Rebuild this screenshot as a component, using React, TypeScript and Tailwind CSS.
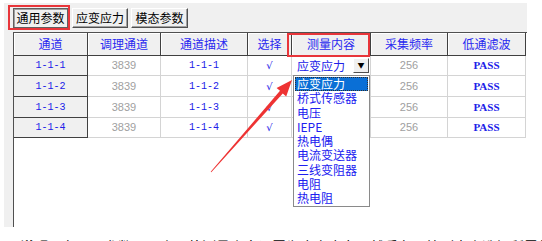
import React from "react";

const cn = "font-['Noto_Sans_CJK_SC',sans-serif]";

const cols = [74, 73, 87, 44, 79, 77, 78];
const heads = ["通道", "调理通道", "通道描述", "选择", "测量内容", "采集频率", "低通滤波"];
const rowHeights = [20, 21, 21, 20];
const options = ["应变应力", "桥式传感器", "电压", "IEPE", "热电偶", "电流变送器", "三线变阻器", "电阻", "热电阻"];

function Tab({ label, w, active }: { label: string; w: number; active?: boolean }) {
    return (
        <div
            style={{ width: w }}
            className={
                "h-[20px] flex items-center justify-center text-[12px] text-black bg-[#f0f0f0] " +
                (active
                    ? "border border-[#606060] shadow-[inset_1px_1px_0_#a0a0a0]"
                    : "border border-t-white border-l-white border-r-[#505050] border-b-[#505050] shadow-[inset_-1px_-1px_0_#a0a0a0]")
            }
        >
            {label}
        </div>
    );
}

export default function App() {
    return (
        <div className={"relative w-[542px] h-[241px] bg-white overflow-hidden " + cn}>
            {/* Window panel */}
            <div className="ml-[4px] mt-[3px] w-[523px] h-[224px] bg-[#f0f0f0] flex flex-col">
                <div className="flex pl-[9px] pt-[5px] h-[29px]">
                    <Tab label="通用参数" w={55} active />
                    <div className="w-[4px]" />
                    <Tab label="应变应力" w={56} />
                    <div className="w-[3px]" />
                    <Tab label="模态参数" w={57} />
                </div>

                {/* Grid */}
                <div className="ml-[9px] flex-1 bg-white border-l border-t border-[#505050] flex flex-col overflow-hidden">
                    <div className="flex h-[23px]">
                        {heads.map((h, i) => (
                            <div
                                key={h}
                                style={{ width: cols[i] }}
                                className="shrink-0 bg-[#f0f0f0] border-r border-b border-[#404040] shadow-[inset_1px_1px_0_#ffffff] flex items-center justify-center text-[12px] text-[#2828f0]"
                            >
                                {h}
                            </div>
                        ))}
                    </div>
                    {rowHeights.map((rh, r) => {
                        const id = `1-1-${r + 1}`;
                        return (
                            <div key={id} className="flex" style={{ height: rh }}>
                                <div style={{ width: cols[0] }} className="shrink-0 bg-[#f0f0f0] border-r border-b border-[#404040] flex items-center justify-center font-['Liberation_Mono',monospace] text-[10px] text-[#2020e8]">
                                    {id}
                                </div>
                                <div style={{ width: cols[1] }} className="shrink-0 border-r border-b border-[#d4d4d4] flex items-center justify-center font-['Liberation_Sans',sans-serif] text-[11px] text-[#a0a0a0]">
                                    3839
                                </div>
                                <div style={{ width: cols[2] }} className="shrink-0 border-r border-b border-[#d4d4d4] flex items-center justify-center font-['Liberation_Mono',monospace] text-[10px] text-[#2020e8]">
                                    {id}
                                </div>
                                <div style={{ width: cols[3] }} className="shrink-0 border-r border-b border-[#d4d4d4] flex items-center justify-center font-['DejaVu_Sans',sans-serif] italic text-[10px] text-[#2020e8]">
                                    √
                                </div>
                                <div style={{ width: cols[4] }} className="shrink-0 border-r border-b border-[#d4d4d4] flex items-center">
                                    {r === 0 && (
                                        <>
                                            <span className="flex-1 pl-[5px] text-[12px] text-[#2020e8]">应变应力</span>
                                            <span className="w-[16px] h-[15px] mr-[1px] bg-[#f0f0f0] border border-t-white border-l-white border-r-[#505050] border-b-[#505050] flex items-center justify-center text-[7px] text-black">
                                                ▼
                                            </span>
                                        </>
                                    )}
                                </div>
                                <div style={{ width: cols[5] }} className="shrink-0 border-r border-b border-[#d4d4d4] flex items-center justify-center font-['Liberation_Sans',sans-serif] text-[11px] text-[#a0a0a0]">
                                    256
                                </div>
                                <div style={{ width: cols[6] }} className="shrink-0 border-r border-b border-[#d4d4d4] flex items-center justify-center font-['Liberation_Serif',serif] font-bold text-[11px] text-[#2020e8]">
                                    PASS
                                </div>
                            </div>
                        );
                    })}
                </div>
            </div>

            {/* Cut-off caption below the screenshot */}
            <div className="mt-[9px] pl-[20px] text-[14px] leading-[20px] text-black whitespace-nowrap">
                <b>说明：</b>在通用参数页面中，将测量内容设置为应变应力，然后在下拉列表中选择所需的传感器类型。
            </div>

            {/* Dropdown list */}
            <div className="absolute left-[293px] top-[75px] w-[77px] h-[132px] bg-white border border-[#8a8a8a] pt-[1px] px-[1px] text-[12px] text-[#2020f0]">
                {options.map((o, i) => (
                    <div
                        key={o}
                        className={
                            "h-[14.3px] leading-[14.3px] pl-[2px] whitespace-nowrap " +
                            (i === 0 ? "bg-[#0a6fd6] text-white outline-1 outline-dotted outline-[#303030] -outline-offset-1" : "")
                        }
                    >
                        {o}
                    </div>
                ))}
            </div>

            {/* Red highlight boxes */}
            <div className="absolute left-[8px] top-[5px] w-[62px] h-[25px] border-2 border-[#e8353a]" />
            <div className="absolute left-[287px] top-[33px] w-[83px] h-[24px] border-2 border-[#e8353a]" />

            {/* Red arrow */}
            <svg className="absolute left-0 top-0 pointer-events-none" width="542" height="241" viewBox="0 0 542 241">
                <polygon
                    fill="#ee3333"
                    points="211.3,172.2 282.8,93.4 286.2,96.4 292,80 276.6,88 280.0,90.8 210.7,171.8"
                />
            </svg>
        </div>
    );
}
